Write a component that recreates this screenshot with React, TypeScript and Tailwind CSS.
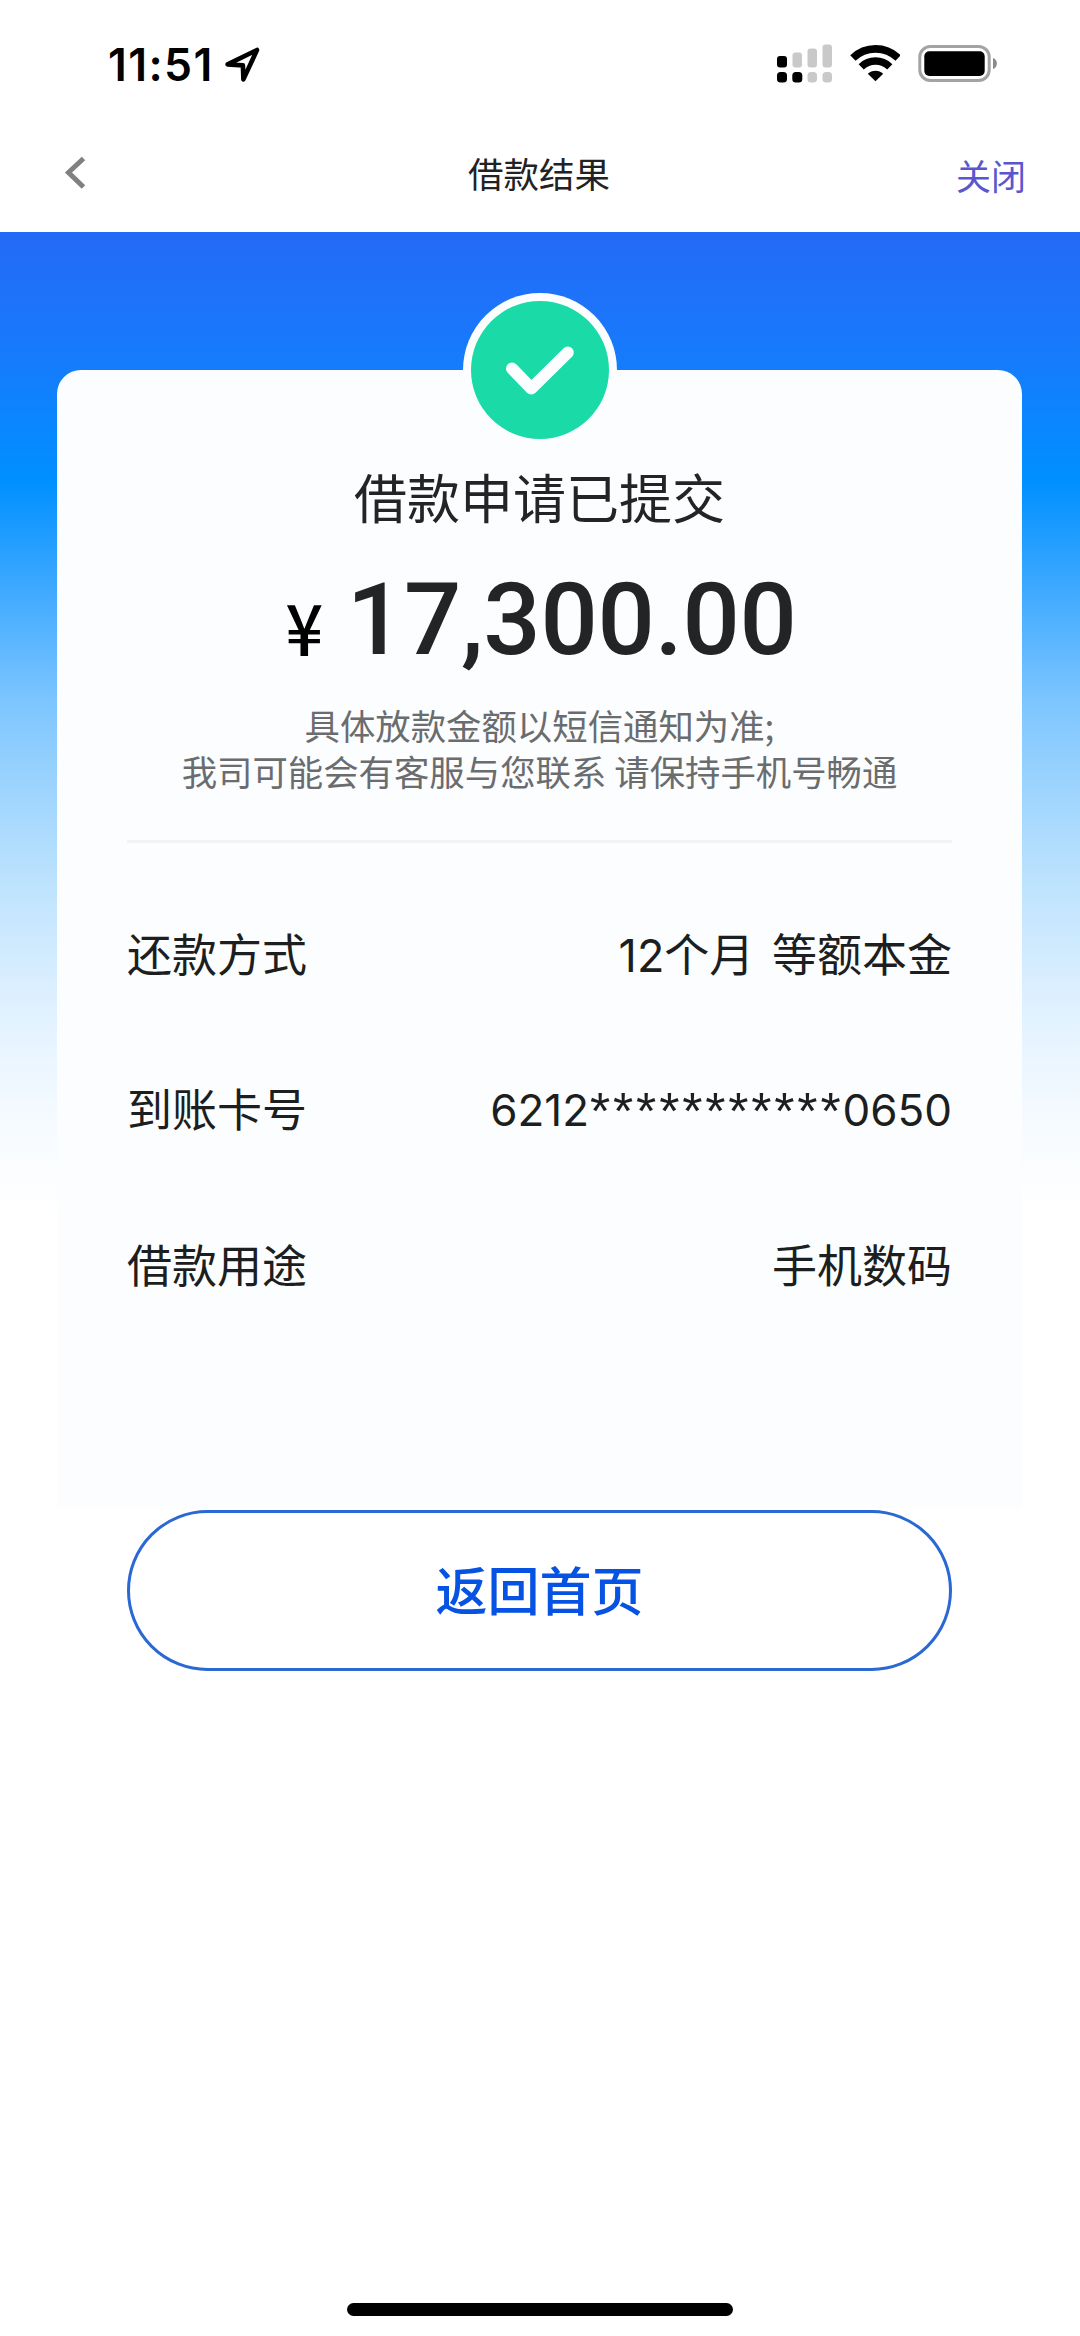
import type { ReactNode } from "react";

function StatusBar() {
  return (
    <div className="flex h-[126px] items-start justify-between pl-[108px] pr-[83px] pt-[42px]">
      <div className="flex h-[46px] items-center">
        <span className="w-[103px] whitespace-nowrap font-['Inter'] text-[44.500px] font-semibold leading-[46px] tracking-[1.400px] text-black">
          11:51
        </span>
        <svg className="ml-[13px] h-[38px] w-[38px]" viewBox="0 0 38 38" fill="none" stroke="#000" strokeWidth="4.600" strokeLinejoin="round">
          <path d="M3.600 18.400 33 4 19.400 33.400 18.900 19.400Z" />
        </svg>
      </div>
      <div className="flex h-[46px] items-start pt-[2px]">
        <svg className="h-[40px] w-[58px]" viewBox="0 0 58 40">
          <g fill="#c9c9c9">
            <rect x="16.500" y="8.500" width="9.500" height="15" rx="3" />
            <rect x="31.500" y="4.500" width="9.500" height="19" rx="3" />
            <rect x="46.500" y="0.500" width="9.500" height="23" rx="3" />
            <rect x="31.500" y="28" width="9.500" height="10.500" rx="3.500" />
            <rect x="46.500" y="28" width="9.500" height="10.500" rx="3.500" />
          </g>
          <g fill="#000">
            <rect x="1" y="12" width="10" height="11.500" rx="3" />
            <rect x="1" y="28" width="10" height="10.500" rx="3.500" />
            <rect x="16.300" y="28" width="10" height="10.500" rx="3.500" />
          </g>
        </svg>
        <svg className="ml-[16px] h-[38px] w-[50px]" viewBox="0 0 50 38" fill="none" stroke="#000">
          <path d="M2.900 14A32.500 32.500 0 0 1 48.100 14" strokeWidth="7.600" />
          <path d="M11.200 22.800A20.600 20.600 0 0 1 39.800 22.800" strokeWidth="7.400" />
          <path d="M25.500 37.200 17.800 29.800A11 11 0 0 1 33.200 29.800Z" fill="#000" stroke="none" />
        </svg>
        <svg className="ml-[17px] h-[40px] w-[80px]" viewBox="0 0 80 40">
          <rect x="2.800" y="2.500" width="69.400" height="34" rx="10.500" fill="none" stroke="#a3a3a3" strokeWidth="3" />
          <rect x="7.300" y="7.200" width="60.400" height="24.800" rx="5" fill="#000" />
          <path d="M76 14C81.200 15.500 81.200 23.500 76 25Z" fill="#8c8c8c" />
        </svg>
      </div>
    </div>
  );
}

function NavBar() {
  return (
    <div className="grid h-[106px] grid-cols-3 items-start px-[54px]">
      <svg className="ml-[8px] mt-[27px] h-[38px] w-[26px]" viewBox="0 0 26 38" fill="none" stroke="#808080" strokeWidth="5">
        <path d="M21.500 5.500 6.500 19.500 21.500 34" />
      </svg>
      <h1 className="mt-[25px] text-center text-[35.500px] font-normal leading-[50px] text-[#222222]">
        <span className="relative -left-px">借款结果</span>
      </h1>
      <button className="mt-[26px] justify-self-end text-[35px] leading-[50px] text-[#5956cf]">关闭</button>
    </div>
  );
}

function Row({ label, children }: { label: string; children: ReactNode }) {
  return (
    <div className="flex h-[155.500px] items-center justify-between text-[45px] leading-[60px] text-[#1c1e20]">
      <span>{label}</span>
      <span className="whitespace-pre [word-spacing:5px]">{children}</span>
    </div>
  );
}

export default function App() {
  return (
    <div className="flex h-[2336px] w-[1080px] flex-col overflow-hidden bg-white font-['Inter','Noto_Sans_CJK_SC',sans-serif]">
      <StatusBar />
      <NavBar />
      <main className="flex flex-1 flex-col items-center bg-[linear-gradient(180deg,#246af7_0px,#1a77fb_100px,#0090ff_250px,#45acff_368px,#7cc5ff_468px,#a2d6fd_568px,#c2e5fe_668px,#dcefff_760px,#ebf6ff_828px,#f7fbff_900px,#ffffff_980px)] pt-[138px]">
        <section className="relative mr-px flex h-[1138px] w-[965px] flex-col items-center rounded-t-[24px] bg-[#fcfdfe] px-[70px]">
          <div className="absolute -top-[77px] left-1/2 flex h-[154px] w-[154px] -translate-x-1/2 items-center justify-center rounded-full bg-[#fcfdfe]">
            <div className="flex h-[138px] w-[138px] items-center justify-center rounded-full bg-[#1adba8]">
              <svg className="h-[138px] w-[138px]" viewBox="0 0 138 138" fill="none" stroke="#fcfdfe" strokeWidth="12" strokeLinecap="round" strokeLinejoin="round">
                <path d="M41 67.500 60.300 87.500 96.800 51.500" />
              </svg>
            </div>
          </div>
          <h2 className="mt-[95px] text-[53px] font-normal leading-[70px] text-[#222426]">借款申请已提交</h2>
          <div className="mt-[25px] flex h-[120px] items-baseline justify-center text-[#222426]">
            <span className="relative left-[2px] top-[2px] font-['Noto_Sans_CJK_SC'] text-[71px] font-medium leading-[120px] text-black">
              <span className="inline-block scale-x-[0.93]">¥</span>
            </span>
            <span className="ml-[24px] font-['Roboto'] text-[101px] font-medium leading-[120px] tracking-[-0.300px]">17,300.00</span>
          </div>
          <p className="mt-[22px] whitespace-nowrap text-center font-['Noto_Sans_CJK_SC'] text-[35.400px] leading-[45.500px] text-[#6a6c6e]">
            具体放款金额以短信通知为准;
            <br />
            我司可能会有客服与您联系 请保持手机号畅通
          </p>
          <div className="mt-[47px] h-[3px] w-full bg-[#f1f3f5]" />
          <div className="mt-[35px] w-full">
            <Row label="还款方式">12个月 等额本金</Row>
            <Row label="到账卡号">
              <span className="relative -top-px">
                <span className="text-[44px]">6212</span>
                <span className="relative left-px top-[3px] font-['Liberation_Sans'] text-[52px] leading-[50px] tracking-[2.800px]">***********</span>
                <span className="text-[44px]">0650</span>
              </span>
            </Row>
            <Row label="借款用途">手机数码</Row>
          </div>
        </section>
        <button className="mr-px mt-[2px] h-[161px] w-[825px] rounded-full border-[3px] border-[#2a68d4] bg-white pt-[4px] text-[52px] font-medium leading-[70px] text-[#0652e2]">
          返回首页
        </button>
        <div className="mb-[20.500px] mt-auto h-[13px] w-[386px] rounded-full bg-black" />
      </main>
    </div>
  );
}
